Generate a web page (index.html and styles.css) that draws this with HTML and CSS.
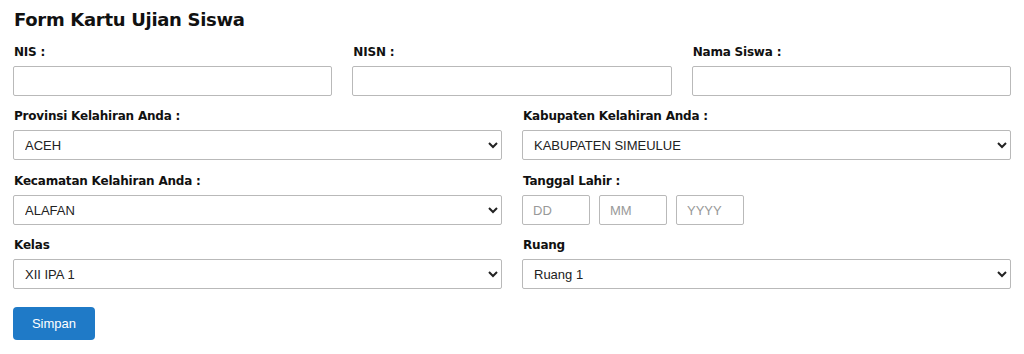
FILE: index.html
```html
<!DOCTYPE html>
<html lang="id">
<head>
<meta charset="utf-8">
<title>Form Kartu Ujian Siswa</title>
<link rel="stylesheet" href="styles.css">
</head>
<body>
<main class="page">
  <h1 class="title">Form Kartu Ujian Siswa</h1>
  <form class="form">
    <div class="row row-3">
      <div class="field">
        <label class="label">NIS :</label>
        <input class="input" type="text">
      </div>
      <div class="field">
        <label class="label">NISN :</label>
        <input class="input" type="text">
      </div>
      <div class="field">
        <label class="label">Nama Siswa :</label>
        <input class="input" type="text">
      </div>
    </div>
    <div class="row row-2">
      <div class="field">
        <label class="label">Provinsi Kelahiran Anda :</label>
        <select class="select"><option>ACEH</option></select>
      </div>
      <div class="field">
        <label class="label">Kabupaten Kelahiran Anda :</label>
        <select class="select"><option>KABUPATEN SIMEULUE</option></select>
      </div>
    </div>
    <div class="row row-2">
      <div class="field">
        <label class="label">Kecamatan Kelahiran Anda :</label>
        <select class="select"><option>ALAFAN</option></select>
      </div>
      <div class="field">
        <label class="label">Tanggal Lahir :</label>
        <div class="date">
          <input class="input small" type="text" placeholder="DD">
          <input class="input small" type="text" placeholder="MM">
          <input class="input small" type="text" placeholder="YYYY">
        </div>
      </div>
    </div>
    <div class="row row-2">
      <div class="field">
        <label class="label">Kelas</label>
        <select class="select"><option>XII IPA 1</option></select>
      </div>
      <div class="field">
        <label class="label">Ruang</label>
        <select class="select"><option>Ruang 1</option></select>
      </div>
    </div>
    <div class="actions">
      <button class="btn" type="button">Simpan</button>
    </div>
  </form>
</main>
</body>
</html>
```
FILE: styles.css
```css
* { box-sizing: border-box; }
html, body { margin: 0; padding: 0; background: #fff; }
body {
  font-family: "DejaVu Sans", sans-serif;
  color: #111;
}
.page {
  padding: 8px 13px 0 13px;
}
.title {
  margin: 0 0 0 1px;
  font-size: 18px;
  font-weight: bold;
  line-height: 24px;
  letter-spacing: -0.3px;
  color: #111;
}
.form {
  display: flex;
  flex-direction: column;
  margin-top: 12px;
}
.row {
  display: grid;
  column-gap: 20px;
  margin-bottom: 12px;
}
.row:nth-child(2) { margin-bottom: 13px; }
.row-3 { grid-template-columns: 1fr 1fr 1fr; }
.row-2 { grid-template-columns: 1fr 1fr; }
.field {
  display: flex;
  flex-direction: column;
}
.label {
  font-size: 12px;
  font-weight: bold;
  line-height: 16px;
  letter-spacing: -0.2px;
  margin: 0 0 6px 1px;
  color: #111;
}
.input, .select {
  height: 30px;
  width: 100%;
  border: 1px solid #b9b9b9;
  border-radius: 2px;
  background: #fff;
  font-family: "Liberation Sans", Arial, sans-serif;
  font-size: 13px;
  color: #222;
  padding: 0 10px;
  margin: 0;
}
.select { padding-left: 7px; }
.date {
  display: flex;
  gap: 9px;
}
.input.small {
  width: 68px;
}
.input::placeholder { color: #999; }
.actions {
  margin-top: 6px;
}
.btn {
  width: 82px;
  height: 33px;
  border: none;
  border-radius: 4px;
  background: #1f7ac7;
  color: #fff;
  font-family: "Liberation Sans", Arial, sans-serif;
  font-size: 13px;
  padding: 0;
}
```
